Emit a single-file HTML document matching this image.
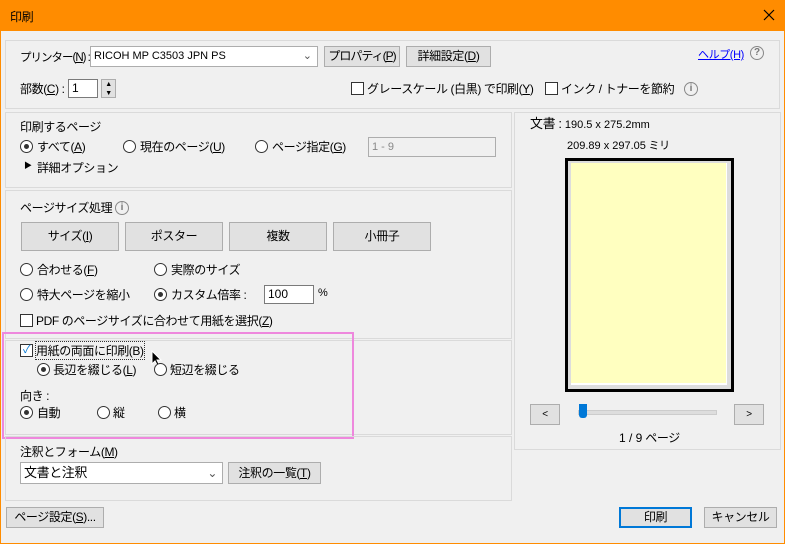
<html><head><style>
body{margin:0;width:785px;height:544px;overflow:hidden;background:#f0f0f0;font-family:"Liberation Sans","Noto Sans CJK JP",sans-serif;font-size:12px;color:#000;position:relative;letter-spacing:-0.4px}
div{white-space:nowrap}
.a{position:absolute}
.p{position:absolute;border:1px solid #dadada}
.b{position:absolute;background:#e1e1e1;border:1px solid #adadad;text-align:center;box-sizing:border-box;overflow:hidden}
.r{position:absolute;width:11px;height:11px;border:1px solid #333;border-radius:50%;background:#fff}
.r.on::after{content:"";position:absolute;left:3px;top:3px;width:5px;height:5px;border-radius:50%;background:#333}
.c{position:absolute;width:11px;height:11px;border:1px solid #333;background:#fff}
.i{position:absolute;width:12px;height:12px;border:1px solid #888;border-radius:50%;color:#777;font-size:10px;text-align:center;line-height:12px;font-weight:bold;letter-spacing:0}
.in{position:absolute;background:#fff;border:1px solid #7a7a7a;box-sizing:border-box;padding-left:3px;overflow:hidden}
u{text-decoration:underline}
.l{letter-spacing:0}
</style></head><body>
<div class="a" style="left:0;top:0;width:785px;height:31px;background:#ff8c00"></div>
<div class="a" style="left:10px;top:8px;font-size:12px">印刷</div>
<svg class="a" style="left:763px;top:9px" width="12" height="12"><path d="M1 1L11 11M11 1L1 11" stroke="#000" stroke-width="1.2"/></svg>
<div class="a" style="left:0;top:31px;width:1px;height:513px;background:#ff8c00"></div>
<div class="a" style="left:784px;top:31px;width:1px;height:513px;background:#ff8c00"></div>
<div class="a" style="left:0;top:543px;width:785px;height:1px;background:#ff8c00"></div>

<div class="p" style="left:5px;top:40px;width:773px;height:67px"></div>
<div class="a" style="left:20px;top:49px;letter-spacing:-1px;font-size:11.5px">プリンター(<u>N</u>) :</div>
<div class="in l" style="left:90px;top:46px;width:228px;height:21px;border-color:#adadad;line-height:19px;font-size:11px">RICOH MP C3503 JPN PS<span style="position:absolute;right:5px;color:#555">⌄</span></div>
<div class="b" style="left:324px;top:46px;width:76px;height:21px;line-height:19px;letter-spacing:-1px">プロパティ(<u>P</u>)</div>
<div class="b" style="left:406px;top:46px;width:85px;height:21px;line-height:19px">詳細設定(<u>D</u>)</div>
<div class="a" style="left:698px;top:46px;color:#00f;text-decoration:underline;font-size:11px">ヘルプ(H)</div>
<div class="i" style="left:750px;top:46px">?</div>
<div class="a" style="left:20px;top:80px">部数(<u>C</u>) :</div>
<div class="in" style="left:68px;top:79px;width:30px;height:19px;line-height:17px">1</div>
<div class="b" style="left:101px;top:79px;width:15px;height:19px;font-size:7px;line-height:9px">▲<br>▼</div>
<div class="c" style="left:351px;top:82px"></div>
<div class="a" style="left:367px;top:80px">グレースケール (白黒) で印刷(<u>Y</u>)</div>
<div class="c" style="left:545px;top:82px"></div>
<div class="a" style="left:561px;top:80px">インク / トナーを節約</div>
<div class="i" style="left:684px;top:82px">i</div>

<div class="p" style="left:5px;top:112px;width:505px;height:74px"></div>
<div class="a" style="left:20px;top:118px">印刷するページ</div>
<div class="r on" style="left:20px;top:140px"></div><div class="a" style="left:37px;top:138px">すべて(<u>A</u>)</div>
<div class="r" style="left:123px;top:140px"></div><div class="a" style="left:140px;top:138px">現在のページ(<u>U</u>)</div>
<div class="r" style="left:255px;top:140px"></div><div class="a" style="left:272px;top:138px">ページ指定(<u>G</u>)</div>
<div class="in l" style="left:368px;top:137px;width:128px;height:20px;background:#f0f0f0;border-color:#adadad;color:#888;line-height:18px;font-size:11px">1 - 9</div>
<div class="a" style="left:24px;top:160px;font-size:8px">▶</div><div class="a" style="left:37px;top:159px">詳細オプション</div>

<div class="p" style="left:5px;top:190px;width:505px;height:147px"></div>
<div class="a" style="left:20px;top:199px">ページサイズ処理</div>
<div class="i" style="left:115px;top:201px">i</div>
<div class="b" style="left:21px;top:222px;width:98px;height:29px;line-height:27px">サイズ(<u>I</u>)</div>
<div class="b" style="left:125px;top:222px;width:98px;height:29px;line-height:27px">ポスター</div>
<div class="b" style="left:229px;top:222px;width:98px;height:29px;line-height:27px">複数</div>
<div class="b" style="left:333px;top:222px;width:98px;height:29px;line-height:27px">小冊子</div>
<div class="r" style="left:20px;top:263px"></div><div class="a" style="left:37px;top:261px">合わせる(<u>F</u>)</div>
<div class="r" style="left:154px;top:263px"></div><div class="a" style="left:171px;top:261px">実際のサイズ</div>
<div class="r" style="left:20px;top:288px"></div><div class="a" style="left:37px;top:286px">特大ページを縮小</div>
<div class="r on" style="left:154px;top:288px"></div><div class="a" style="left:171px;top:286px">カスタム倍率 :</div>
<div class="in l" style="left:264px;top:285px;width:50px;height:19px;line-height:17px">100</div>
<div class="a" style="left:318px;top:287px;font-size:11px">%</div>
<div class="c" style="left:20px;top:314px"></div><div class="a" style="left:36px;top:312px">PDF のページサイズに合わせて用紙を選択(<u>Z</u>)</div>

<div class="p" style="left:5px;top:340px;width:505px;height:93px"></div>
<div class="c" style="left:20px;top:344px;border-color:#333;color:#0078d7;font-size:11px;line-height:11px;text-align:center">✓</div>
<div class="a" style="left:36px;top:342px;outline:1px dotted #333">用紙の両面に印刷(B)</div>
<svg class="a" style="left:151px;top:350px" width="12" height="18"><path d="M1 1L1 14L4 11L7 17L9 16L6 10L10 10Z" fill="#000" stroke="#fff" stroke-width="1"/></svg>
<div class="r on" style="left:37px;top:363px"></div><div class="a" style="left:53px;top:361px">長辺を綴じる(<u>L</u>)</div>
<div class="r" style="left:154px;top:363px"></div><div class="a" style="left:170px;top:361px">短辺を綴じる</div>
<div class="a" style="left:20px;top:387px">向き :</div>
<div class="r on" style="left:20px;top:406px"></div><div class="a" style="left:37px;top:404px">自動</div>
<div class="r" style="left:97px;top:406px"></div><div class="a" style="left:113px;top:404px">縦</div>
<div class="r" style="left:158px;top:406px"></div><div class="a" style="left:174px;top:404px">横</div>
<div class="a" style="left:2px;top:332px;width:348px;height:103px;border:2px solid #ee88dd"></div>

<div class="p" style="left:5px;top:436px;width:505px;height:63px"></div>
<div class="a" style="left:20px;top:443px">注釈とフォーム(<u>M</u>)</div>
<div class="in" style="left:20px;top:462px;width:203px;height:22px;border-color:#adadad;line-height:20px;font-size:13px">文書と注釈<span style="position:absolute;right:5px;color:#555;font-size:12px">⌄</span></div>
<div class="b" style="left:228px;top:462px;width:93px;height:22px;line-height:20px">注釈の一覧(<u>T</u>)</div>
<div class="b" style="left:6px;top:507px;width:98px;height:21px;line-height:19px">ページ設定(<u>S</u>)...</div>

<div class="p" style="left:514px;top:112px;width:265px;height:336px"></div>
<div class="a" style="left:530px;top:113px;font-size:13px">文書 : <span class="l" style="font-size:11px">190.5 x 275.2mm</span></div>
<div class="a" style="left:567px;top:137px;font-size:11px"><span class="l">209.89 x 297.05</span> ミリ</div>
<div class="a" style="left:565px;top:158px;width:163px;height:228px;border:3px solid #000;background:#ddd"></div>
<div class="a" style="left:571px;top:163px;width:156px;height:222px;background:#fff"></div>
<div class="a" style="left:571px;top:163px;width:155px;height:220px;background:#ffffc0"></div>
<div class="b" style="left:530px;top:404px;width:30px;height:21px;line-height:19px;font-size:10px">&lt;</div>
<div class="a" style="left:578px;top:410px;width:137px;height:3px;background:#ddd;border:1px solid #ccc"></div>
<div class="a" style="left:579px;top:404px;width:8px;height:14px;background:#0078d7;border-radius:0 0 3px 3px"></div>
<div class="b" style="left:734px;top:404px;width:30px;height:21px;line-height:19px;font-size:10px">&gt;</div>
<div class="a" style="left:619px;top:429px"><span class="l">1 / 9</span> ページ</div>

<div class="b" style="left:619px;top:507px;width:73px;height:21px;line-height:17px;border:2px solid #0078d7">印刷</div>
<div class="b" style="left:704px;top:507px;width:73px;height:21px;line-height:19px">キャンセル</div>
</body></html>
